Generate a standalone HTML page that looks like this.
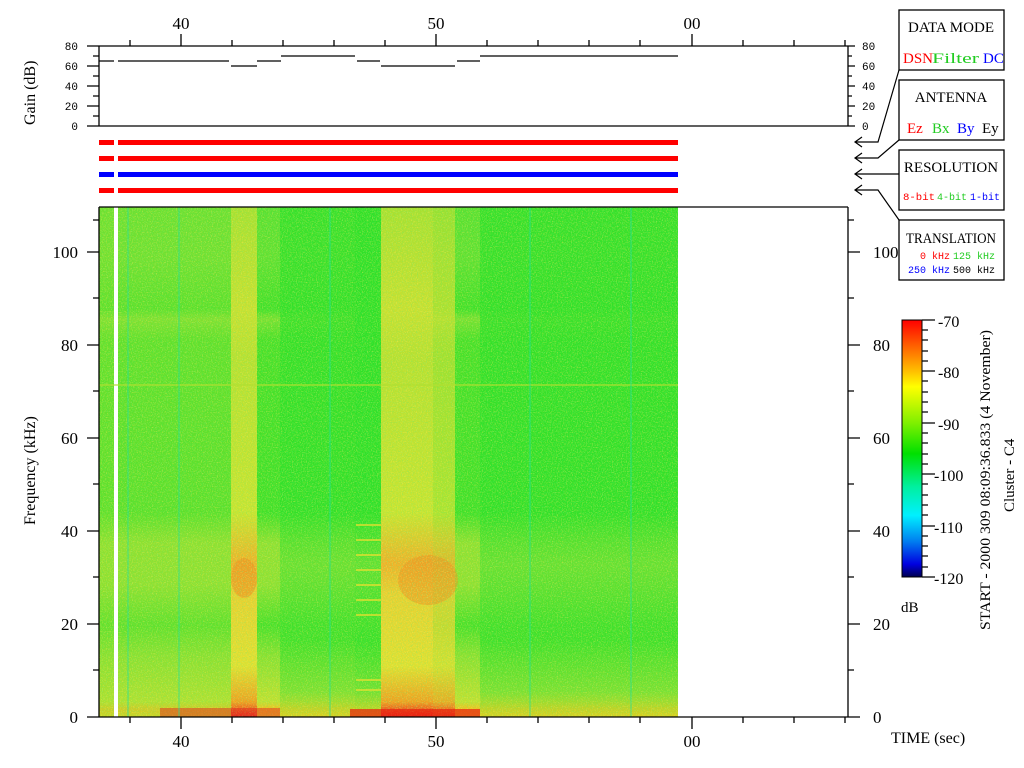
<!DOCTYPE html>
<html><head><meta charset="utf-8"><style>
html,body{margin:0;padding:0;background:#fff;width:1024px;height:768px;overflow:hidden}
svg{display:block}
text{font-family:"Liberation Serif",serif}
.m text{font-family:"Liberation Mono",monospace}
</style></head><body>
<svg width="1024" height="768" viewBox="0 0 1024 768" xmlns="http://www.w3.org/2000/svg">
<defs>
<linearGradient id="bg" x1="0" y1="207" x2="0" y2="717" gradientUnits="userSpaceOnUse">
<stop offset="0" stop-color="#58e030"/>
<stop offset="0.1" stop-color="#60e030"/>
<stop offset="0.2" stop-color="#40e028"/>
<stop offset="0.22" stop-color="#78e030"/>
<stop offset="0.26" stop-color="#48e028"/>
<stop offset="0.6" stop-color="#40e028"/>
<stop offset="0.66" stop-color="#90e030"/>
<stop offset="0.74" stop-color="#90e030"/>
<stop offset="0.82" stop-color="#48e028"/>
<stop offset="0.88" stop-color="#88e030"/>
<stop offset="0.97" stop-color="#c0e030"/>
<stop offset="0.985" stop-color="#f0c020"/>
<stop offset="1" stop-color="#e8d020"/>
</linearGradient>
<linearGradient id="yc" x1="0" y1="207" x2="0" y2="717" gradientUnits="userSpaceOnUse">
<stop offset="0" stop-color="#a8e030"/>
<stop offset="0.2" stop-color="#c8e030"/>
<stop offset="0.3" stop-color="#b8e030"/>
<stop offset="0.6" stop-color="#c8e430"/>
<stop offset="0.7" stop-color="#f0b028"/>
<stop offset="0.76" stop-color="#e8d030"/>
<stop offset="0.9" stop-color="#e0e030"/>
<stop offset="0.97" stop-color="#f0a020"/>
<stop offset="1" stop-color="#f01818"/>
</linearGradient>
<linearGradient id="gc" x1="0" y1="207" x2="0" y2="717" gradientUnits="userSpaceOnUse">
<stop offset="0" stop-color="#30e028"/>
<stop offset="0.6" stop-color="#30e028"/>
<stop offset="0.7" stop-color="#60e030"/>
<stop offset="0.85" stop-color="#38e028"/>
<stop offset="0.95" stop-color="#70e030"/>
<stop offset="1" stop-color="#d8d020"/>
</linearGradient>
<linearGradient id="cb" x1="0" y1="320" x2="0" y2="577" gradientUnits="userSpaceOnUse">
<stop offset="0" stop-color="#ff0000"/>
<stop offset="0.1" stop-color="#ff6000"/>
<stop offset="0.2" stop-color="#ffc000"/>
<stop offset="0.26" stop-color="#ffff00"/>
<stop offset="0.4" stop-color="#80f000"/>
<stop offset="0.52" stop-color="#00e000"/>
<stop offset="0.65" stop-color="#00f0a0"/>
<stop offset="0.76" stop-color="#00f0ff"/>
<stop offset="0.86" stop-color="#0080f0"/>
<stop offset="0.95" stop-color="#0000e0"/>
<stop offset="1" stop-color="#000050"/>
</linearGradient>
<filter id="n" x="0" y="0" width="100%" height="100%">
<feTurbulence type="fractalNoise" baseFrequency="0.8" numOctaves="2" seed="3"/>
<feColorMatrix values="0 0 0 0 1  0 0 0 0 0.85  0 0 0 0 0.1  2.5 0 0 0 -1.2"/>
</filter>
<filter id="n2" x="0" y="0" width="100%" height="100%">
<feTurbulence type="fractalNoise" baseFrequency="0.8" numOctaves="2" seed="9"/>
<feColorMatrix values="0 0 0 0 0.1  0 0 0 0 0.85  0 0 0 0 0.2  2.5 0 0 0 -1.2"/>
</filter>
</defs>

<!-- gain panel -->
<g stroke="#000" stroke-width="1.3" fill="none">
<path d="M87 46H848M99 46V126M87 126H848M848 46V126"/>
<path d="M87 66H99M93 56H99M87 86H99M93 76H99M87 106H99M93 96H99M93 116H99"/>
<path d="M848 66H855M848 86H855M848 106H855M848 56H852M848 76H852M848 96H852M848 116H852M848 46H855M848 126H855"/>
<path d="M130 46V40M181 46V34M232 46V40M283 46V40M334 46V40M385 46V40M436 46V34M487 46V40M538 46V40M589 46V40M640 46V40M692 46V34M743 46V40M794 46V40M845 46V40"/>
</g>
<g stroke="#000" stroke-width="1.3">
<path d="M99 61H114M118 61H229M231 66H257M257 61H281M281 56H355M357 61H380M381 66H455M457 61H480M480 56H678"/>
</g>
<g class="m" font-size="11" text-anchor="end">
<text x="78" y="50">80</text><text x="78" y="70">60</text><text x="78" y="90">40</text><text x="78" y="110">20</text><text x="78" y="130">0</text>
</g>
<g class="m" font-size="11">
<text x="862" y="50">80</text><text x="862" y="70">60</text><text x="862" y="90">40</text><text x="862" y="110">20</text><text x="862" y="130">0</text>
</g>
<text font-size="16" transform="translate(35,125) rotate(-90)">Gain (dB)</text>
<g font-size="17" text-anchor="middle"><text x="181" y="29">40</text><text x="436" y="29">50</text><text x="692" y="29">00</text></g>

<!-- bars -->
<g>
<rect x="99" y="140" width="15" height="5" fill="#f00"/><rect x="118" y="140" width="560" height="5" fill="#f00"/>
<rect x="99" y="156" width="15" height="5" fill="#f00"/><rect x="118" y="156" width="560" height="5" fill="#f00"/>
<rect x="99" y="172" width="15" height="5" fill="#00f"/><rect x="118" y="172" width="560" height="5" fill="#00f"/>
<rect x="99" y="188" width="15" height="5" fill="#f00"/><rect x="118" y="188" width="560" height="5" fill="#f00"/>
</g>

<!-- spectrogram -->
<rect x="99" y="207" width="579" height="510" fill="url(#bg)"/>
<rect x="99" y="207" width="15" height="510" fill="#90e030" opacity="0.4"/>
<rect x="118" y="207" width="113" height="510" fill="#90e030" opacity="0.35"/>
<rect x="231" y="207" width="26" height="510" fill="url(#yc)"/>
<rect x="280" y="207" width="75" height="510" fill="url(#gc)" opacity="0.8"/>
<rect x="355" y="207" width="26" height="510" fill="url(#gc)"/>
<rect x="381" y="207" width="52" height="510" fill="url(#yc)"/>
<rect x="433" y="207" width="22" height="510" fill="url(#yc)" opacity="0.8"/>
<rect x="480" y="207" width="198" height="510" fill="url(#gc)" opacity="0.85"/>
<ellipse cx="244" cy="578" rx="13" ry="20" fill="#f09020" opacity="0.6"/>
<ellipse cx="428" cy="580" rx="30" ry="25" fill="#f09020" opacity="0.5"/>
<rect x="99" y="207" width="579" height="510" filter="url(#n)" opacity="0.55"/>
<rect x="99" y="207" width="579" height="510" filter="url(#n2)" opacity="0.45"/>
<rect x="114" y="207" width="4" height="510" fill="#fff"/>
<rect x="99" y="384" width="579" height="2" fill="#b0e030" opacity="0.6"/>
<rect x="160" y="708" width="120" height="9" fill="#e03020" opacity="0.5"/>
<rect x="350" y="709" width="130" height="8" fill="#e82010" opacity="0.7"/>
<g stroke="#20e0a0" stroke-width="1" opacity="0.7"><path d="M128 207V717M179 207V717M330 207V717M530 207V717M631 207V717"/></g>
<g stroke="#e8e030" stroke-width="2" opacity="0.7"><path d="M356 570H381M356 585H381M356 600H381M356 615H381M356 555H381M356 540H381M356 525H381M356 680H381M356 690H381"/></g>

<!-- axes -->
<g stroke="#000" stroke-width="1.3" fill="none">
<path d="M99 207H848M99 207V717M848 207V717M99 717H848"/>
<path d="M87 717H99M87 624H99M87 531H99M87 438H99M87 345H99M87 252H99M93 670H99M93 577H99M93 484H99M93 391H99M93 298H99M93 220H99"/>
<path d="M848 717H860M848 624H860M848 531H860M848 438H860M848 345H860M848 252H860M848 670H854M848 577H854M848 484H854M848 391H854M848 298H854M848 220H854"/>
<path d="M130 717V723M181 717V729M232 717V723M283 717V723M334 717V723M385 717V723M436 717V729M487 717V723M538 717V723M589 717V723M640 717V723M692 717V729M743 717V723M794 717V723M845 717V723"/>
</g>
<g font-size="17" text-anchor="end">
<text x="78" y="723">0</text><text x="78" y="630">20</text><text x="78" y="537">40</text><text x="78" y="444">60</text><text x="78" y="351">80</text><text x="78" y="258">100</text>
</g>
<g font-size="17">
<text x="873" y="723">0</text><text x="873" y="630">20</text><text x="873" y="537">40</text><text x="873" y="444">60</text><text x="873" y="351">80</text><text x="873" y="258">100</text>
</g>
<text font-size="16" transform="translate(35,525) rotate(-90)">Frequency (kHz)</text>
<g font-size="17" text-anchor="middle"><text x="181" y="747">40</text><text x="436" y="747">50</text><text x="692" y="747">00</text></g>
<text x="891" y="743" font-size="16">TIME (sec)</text>

<!-- legend boxes -->
<g fill="#fff" stroke="#000" stroke-width="1.3">
<rect x="899" y="10" width="105" height="60"/>
<rect x="899" y="80" width="105" height="60"/>
<rect x="899" y="150" width="105" height="60"/>
<rect x="899" y="220" width="105" height="60"/>
</g>
<g stroke="#000" stroke-width="1.2" fill="none">
<path d="M899 70L878 142H855M862 137L855 142L862 147"/>
<path d="M899 140L878 158H855M862 153L855 158L862 163"/>
<path d="M899 174H855M862 169L855 174L862 179"/>
<path d="M899 220L878 190H855M862 185L855 190L862 195"/>
</g>
<g font-size="15" text-anchor="middle">
<text x="951" y="32" textLength="86" lengthAdjust="spacingAndGlyphs">DATA MODE</text>
<text x="951" y="102">ANTENNA</text>
<text x="951" y="172">RESOLUTION</text>
<text x="951" y="243" textLength="90" lengthAdjust="spacingAndGlyphs">TRANSLATION</text>
</g>
<g font-size="15">
<text x="903" y="63" fill="#f00">DSN</text><text x="932" y="63" fill="#2c2" textLength="47" lengthAdjust="spacingAndGlyphs">Filter</text><text x="983" y="63" fill="#00f">DC</text>
<text x="907" y="133" fill="#f00">Ez</text><text x="932" y="133" fill="#2c2">Bx</text><text x="957" y="133" fill="#00f">By</text><text x="982" y="133" fill="#000">Ey</text>
</g>
<g class="m" font-size="10">
<text x="903" y="200" fill="#f00" textLength="32" lengthAdjust="spacingAndGlyphs">8-bit</text><text x="937" y="200" fill="#2c2" textLength="30" lengthAdjust="spacingAndGlyphs">4-bit</text><text x="970" y="200" fill="#00f" textLength="30" lengthAdjust="spacingAndGlyphs">1-bit</text>
<text x="920" y="259" fill="#f00">0 kHz</text><text x="953" y="259" fill="#2c2">125 kHz</text>
<text x="908" y="273" fill="#00f">250 kHz</text><text x="953" y="273" fill="#000">500 kHz</text>
</g>

<!-- colorbar -->
<rect x="902" y="320" width="20" height="257" fill="url(#cb)" stroke="#000" stroke-width="1"/>
<g stroke="#000" stroke-width="1.2">
<path d="M922 320H935M922 371H935M922 423H935M922 474H935M922 526H935M922 577H935"/>
<path d="M922 330H928M922 340H928M922 351H928M922 361H928M922 381H928M922 392H928M922 402H928M922 412H928M922 433H928M922 443H928M922 454H928M922 464H928M922 484H928M922 495H928M922 505H928M922 515H928M922 536H928M922 546H928M922 556H928M922 567H928"/>
</g>
<g font-size="16">
<text x="938" y="327">-70</text><text x="938" y="378">-80</text><text x="938" y="430">-90</text><text x="934" y="481">-100</text><text x="934" y="533">-110</text><text x="934" y="584">-120</text>
</g>
<text x="901" y="612" font-size="15">dB</text>
<text font-size="15" transform="translate(990,630) rotate(-90)" textLength="300" lengthAdjust="spacingAndGlyphs">START - 2000 309 08:09:36.833 (4 November)</text>
<text font-size="15" transform="translate(1014,512) rotate(-90)">Cluster - C4</text>
</svg>
</body></html>
